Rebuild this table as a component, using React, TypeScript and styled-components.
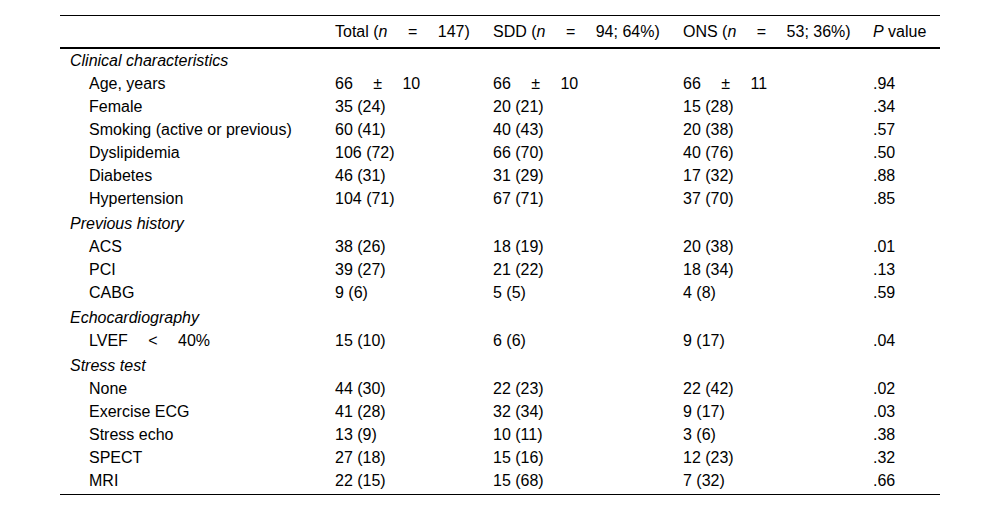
import React from "react";
import styled, { createGlobalStyle } from "styled-components";

const Global = createGlobalStyle`
  html, body { margin: 0; padding: 0; background: #ffffff; }
  body { font-family: "Liberation Sans", Arial, sans-serif; color: #000; }
`;

const Page = styled.div`
  width: 1000px;
  height: 513px;
  padding-top: 15px;
  padding-left: 60px;
  box-sizing: border-box;
  display: flex;
  justify-content: flex-start;
  align-items: flex-start;
`;

const Table = styled.table`
  width: 880px;
  table-layout: fixed;
  border-collapse: separate;
  border-spacing: 0;
  font-family: "Liberation Sans", Arial, sans-serif;
  font-size: 16px;
  line-height: 23px;
`;

const Th = styled.th`
  text-align: left;
  font-weight: normal;
  padding: 4px 10px;
  line-height: 23px;
  vertical-align: top;
  border-top: 1px solid #000;
  border-bottom: 2px solid #000;
  white-space: nowrap;
`;

const Td = styled.td<{ $indent?: boolean; $category?: boolean; $spaced?: boolean; $last?: boolean }>`
  padding: ${(p) => (p.$spaced ? "2px" : "0")} 10px ${(p) => (p.$last ? "2px" : "0")}
    ${(p) => (p.$indent ? "29px" : "10px")};
  line-height: 23px;
  vertical-align: top;
  font-style: ${(p) => (p.$category ? "italic" : "normal")};
  white-space: nowrap;
  border-bottom: ${(p) => (p.$last ? "1px solid #000" : "none")};
`;

const Em = styled.i`
  font-style: italic;
`;

const S = " \u2003";

type Row = { kind: "cat"; label: string } | { kind: "item"; label: string; v: [string, string, string, string] };

const rows: Row[] = [
  { kind: "cat", label: "Clinical characteristics" },
  { kind: "item", label: "Age, years", v: [`66${S}±${S}10`, `66${S}±${S}10`, `66${S}±${S}11`, ".94"] },
  { kind: "item", label: "Female", v: ["35 (24)", "20 (21)", "15 (28)", ".34"] },
  { kind: "item", label: "Smoking (active or previous)", v: ["60 (41)", "40 (43)", "20 (38)", ".57"] },
  { kind: "item", label: "Dyslipidemia", v: ["106 (72)", "66 (70)", "40 (76)", ".50"] },
  { kind: "item", label: "Diabetes", v: ["46 (31)", "31 (29)", "17 (32)", ".88"] },
  { kind: "item", label: "Hypertension", v: ["104 (71)", "67 (71)", "37 (70)", ".85"] },
  { kind: "cat", label: "Previous history" },
  { kind: "item", label: "ACS", v: ["38 (26)", "18 (19)", "20 (38)", ".01"] },
  { kind: "item", label: "PCI", v: ["39 (27)", "21 (22)", "18 (34)", ".13"] },
  { kind: "item", label: "CABG", v: ["9 (6)", "5 (5)", "4 (8)", ".59"] },
  { kind: "cat", label: "Echocardiography" },
  { kind: "item", label: `LVEF${S}<${S}40%`, v: ["15 (10)", "6 (6)", "9 (17)", ".04"] },
  { kind: "cat", label: "Stress test" },
  { kind: "item", label: "None", v: ["44 (30)", "22 (23)", "22 (42)", ".02"] },
  { kind: "item", label: "Exercise ECG", v: ["41 (28)", "32 (34)", "9 (17)", ".03"] },
  { kind: "item", label: "Stress echo", v: ["13 (9)", "10 (11)", "3 (6)", ".38"] },
  { kind: "item", label: "SPECT", v: ["27 (18)", "15 (16)", "12 (23)", ".32"] },
  { kind: "item", label: "MRI", v: ["22 (15)", "15 (68)", "7 (32)", ".66"] },
];

export default function App() {
  return (
    <>
      <Global />
      <Page>
        <Table>
          <colgroup>
            <col style={{ width: 265 }} />
            <col style={{ width: 158 }} />
            <col style={{ width: 190 }} />
            <col style={{ width: 190 }} />
            <col style={{ width: 77 }} />
          </colgroup>
          <thead>
            <tr>
              <Th />
              <Th>
                Total (<Em>n</Em>{S}={S}147)
              </Th>
              <Th>
                SDD (<Em>n</Em>{S}={S}94; 64%)
              </Th>
              <Th>
                ONS (<Em>n</Em>{S}={S}53; 36%)
              </Th>
              <Th>
                <Em>P</Em> value
              </Th>
            </tr>
          </thead>
          <tbody>
            {rows.map((r, i) => {
              const last = i === rows.length - 1;
              if (r.kind === "cat") {
                return (
                  <tr key={i}>
                    <Td $category $spaced={i > 0} colSpan={5}>
                      {r.label}
                    </Td>
                  </tr>
                );
              }
              return (
                <tr key={i}>
                  <Td $indent $last={last}>{r.label}</Td>
                  {r.v.map((c, j) => (
                    <Td key={j} $last={last}>
                      {c}
                    </Td>
                  ))}
                </tr>
              );
            })}
          </tbody>
        </Table>
      </Page>
    </>
  );
}
